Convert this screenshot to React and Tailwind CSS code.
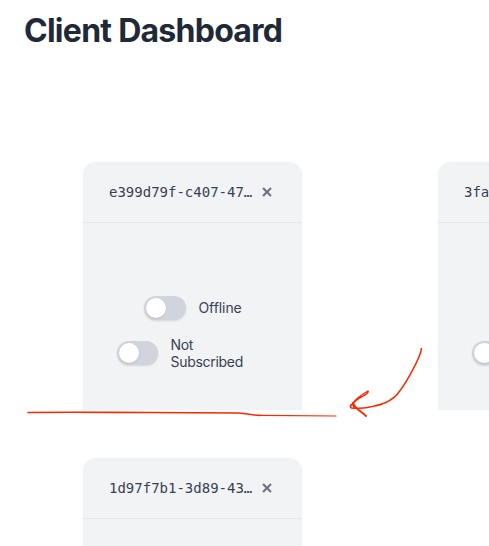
function Toggle({ label, width, offset }) {
  return (
    <div className={`flex items-center gap-[12.5px] ${offset}`}>
      <button
        className={`h-6 shrink-0 rounded-full bg-[#d1d4dc] p-0.5 shadow-[0_1px_2px_rgba(0,0,0,0.12)] ${width}`}
      >
        <span className="block size-5 rounded-full bg-white shadow-[0_1px_2px_rgba(0,0,0,0.1)]" />
      </button>
      {label && (
        <span className="-mt-px w-[76px] text-sm leading-[17px] text-[#374151]">{label}</span>
      )}
    </div>
  );
}

function ClientCard({ id, status, subscription }) {
  return (
    <div className="flex h-[248px] w-[219px] shrink-0 flex-col rounded-t-[14px] bg-[#f2f3f5] shadow-[0_0_2px_rgba(0,0,0,0.07)] [clip-path:inset(-3px_-3px_0_-3px)]">
      <div className="flex h-[61px] shrink-0 items-center border-b border-[#e4e6e9] pl-[25.7px]">
        <span className="w-[144px] whitespace-nowrap font-['DejaVu_Sans_Mono',monospace] text-sm text-[#374151]">
          {id}
        </span>
        <button className="ml-[9px] text-[#6b7280]" aria-label="Remove client">
          <svg width="10" height="10" viewBox="0 0 10 10" fill="none" stroke="currentColor" strokeWidth="2.1">
            <path d="M1 1l8 8M9 1L1 9" />
          </svg>
        </button>
      </div>
      <div className="flex flex-col gap-[21px] pt-[73px]">
        <Toggle label={status} width="w-[42px]" offset="h-6 pl-[60.7px] tracking-[-0.005em]" />
        <Toggle label={subscription} width="w-[41px]" offset="h-6 pl-[33.7px] tracking-[-0.018em]" />
      </div>
    </div>
  );
}

export default function App() {
  return (
    <main className="relative h-[546px] w-[489px] overflow-hidden bg-white font-['Inter',sans-serif]">
      <h1 className="pl-6 pt-[11px] text-[32px] font-bold leading-10 tracking-[-0.023em] text-[#1f2937]">
        Client Dashboard
      </h1>
      <div className="flex flex-col gap-12 pl-[83.3px] pt-[111px]">
        <div className="flex gap-[136px]">
          <ClientCard id="e399d79f-c407-47…" status="Offline" subscription="Not Subscribed" />
          <ClientCard id="3fa" />
        </div>
        <ClientCard id="1d97f7b1-3d89-43…" />
      </div>
      <svg
        className="pointer-events-none absolute inset-0"
        width="489"
        height="546"
        fill="none"
        stroke="#ff2600"
        strokeLinecap="round"
        strokeLinejoin="round"
      >
        <path strokeWidth="1.6" d="M28 412.5C70 412 110 412.5 150 412.5C185 412.8 215 412.8 238 413C249 413.5 250 415.3 260 415.4" />
        <path strokeWidth="1.2" d="M260 415.4C285 415.8 310 416 336 416" />
        <path strokeWidth="1.5" d="M421.4 348.5C421.5 355 407 382 399 392C391 403 379 405 370 407C363 408.5 356 408.5 351.5 408C349.5 407 350 404 353 404.5L354 407.5" />
        <path strokeWidth="1.4" d="M351 405.5C355 399 361 395 368 391C369 392 367 394 364 395.5C359 398.5 355 400 353 404" />
        <path strokeWidth="1.9" d="M353 403C355 409 361 411 366 416" />
      </svg>
    </main>
  );
}
